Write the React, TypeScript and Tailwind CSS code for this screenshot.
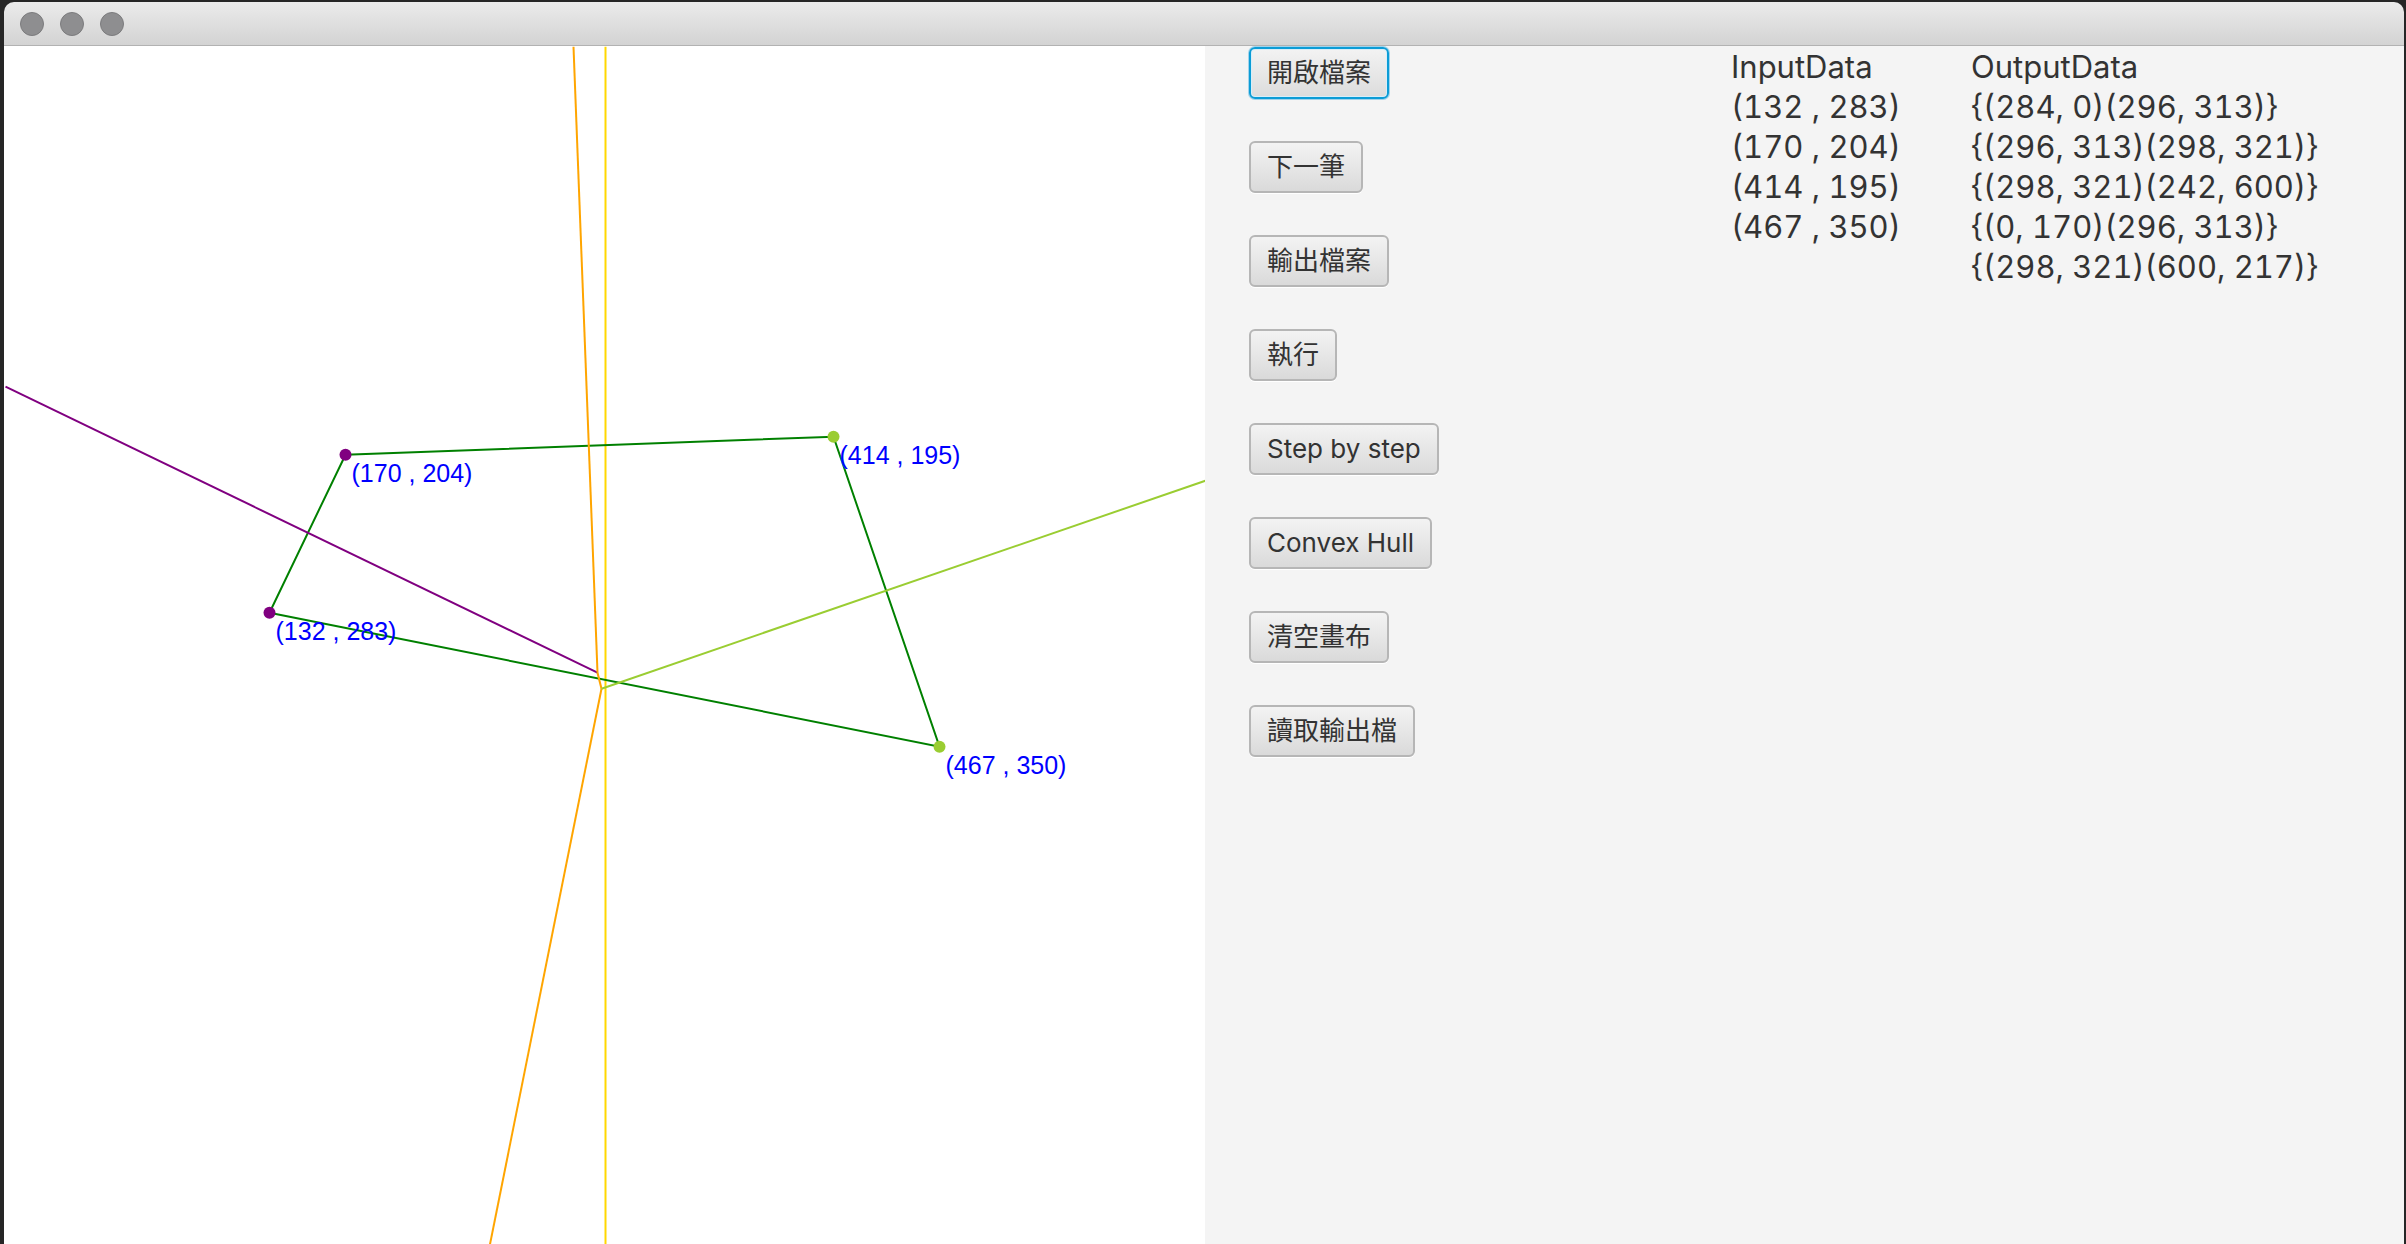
import React from 'react';

// canvas is 600 x 600 logical units, drawn at 2x
const toX = (x: number) => 1.5 + 2 * x;
const toY = (y: number) => 0.7 + 2 * y;

type Pt = [number, number];

const hull: Pt[] = [
  [132, 283],
  [170, 204],
  [414, 195],
  [467, 350],
];

const segments: { from: Pt; to: Pt; color: string }[] = [
  { from: [0, 170], to: [296, 313], color: '#800080' },
  { from: [284, 0], to: [296, 313], color: '#ffa500' },
  { from: [296, 313], to: [298, 321], color: '#ffa500' },
  { from: [298, 321], to: [242, 600], color: '#ffa500' },
  { from: [298, 321], to: [600, 217], color: '#9acd32' },
];

const points: { p: Pt; color: string }[] = [
  { p: [170, 204], color: '#800080' },
  { p: [132, 283], color: '#800080' },
  { p: [414, 195], color: '#9acd32' },
  { p: [467, 350], color: '#9acd32' },
];

const buttons = ['開啟檔案', '下一筆', '輸出檔案', '執行', 'Step by step', 'Convex Hull', '清空畫布', '讀取輸出檔'];

const inputData = ['(132 , 283)', '(170 , 204)', '(414 , 195)', '(467 , 350)'];
const outputData = [
  '{(284, 0)(296, 313)}',
  '{(296, 313)(298, 321)}',
  '{(298, 321)(242, 600)}',
  '{(0, 170)(296, 313)}',
  '{(298, 321)(600, 217)}',
];

const Canvas: React.FC = () => {
  return (
    <div className="w-[1201px] h-full bg-white overflow-hidden">
      <svg width="1201" height="1200" className="block">
        {/* divide line */}
        <line x1={toX(300)} y1={toY(0)} x2={toX(300)} y2={toY(600)} stroke="#ffd700" strokeWidth={2} />

        {/* hull */}
        <polygon
          points={hull.map(([x, y]) => `${toX(x)},${toY(y)}`).join(' ')}
          fill="none"
          stroke="#008000"
          strokeWidth={2}
        />

        {segments.map((s, i) => (
          <line
            key={i}
            x1={toX(s.from[0])}
            y1={toY(s.from[1])}
            x2={toX(s.to[0])}
            y2={toY(s.to[1])}
            stroke={s.color}
            strokeWidth={2}
          />
        ))}

        {points.map(({ p, color }, i) => (
          <g key={i}>
            <circle cx={toX(p[0])} cy={toY(p[1])} r={6} fill={color} />
            <text
              x={toX(p[0]) + 6}
              y={toY(p[1]) + 27}
              fill="#0000ff"
              fontSize={25}
              fontFamily='"Liberation Sans", Arial, sans-serif'
            >
              ({p[0]} , {p[1]})
            </text>
          </g>
        ))}
      </svg>
    </div>
  );
};

const ControlPanel: React.FC = () => {
  return (
    <div className="flex-1 h-full bg-[#f4f4f4] flex text-[#333333] font-['Inter','Noto_Sans_CJK_TC',sans-serif]">
      <div className="w-[526px] pl-[44px] pt-[1px] flex flex-col items-start gap-[42px]">
        {buttons.map((label, index) =>
          index === 0 ? (
            <div
              key={label}
              className="h-[52px] px-[16px] flex items-center rounded-[6px] border-2 border-[#0b9cd6] bg-linear-to-b from-[#f3f3f3] to-[#dcdcdc] shadow-[0_0_0_1px_rgba(60,170,225,0.45),inset_0_0_0_1px_#d7eef9] text-[26px] leading-none whitespace-nowrap"
            >
              {label}
            </div>
          ) : (
            <div
              key={label}
              className="h-[52px] px-[16px] flex items-center rounded-[6px] border-2 border-[#b6b6b6] bg-linear-to-b from-[#f3f3f3] to-[#dadada] shadow-[0_1px_0_#ffffff] text-[26px] leading-none whitespace-nowrap"
            >
              {label}
            </div>
          )
        )}
      </div>

      <div className="w-[240px] pt-[1px] flex flex-col text-[31px] leading-[40px] tabular-nums whitespace-nowrap">
        <div>InputData</div>
        {inputData.map((row) => (
          <div key={row}>{row}</div>
        ))}
      </div>

      <div className="pt-[1px] flex flex-col text-[31px] leading-[40px] tabular-nums whitespace-nowrap">
        <div>OutputData</div>
        {outputData.map((row) => (
          <div key={row}>{row}</div>
        ))}
      </div>
    </div>
  );
};

const App: React.FC = () => {
  return (
    <div className="w-[2406px] h-[1244px] bg-[#262626] pt-[2px] pl-[4px] pr-[2px] overflow-hidden">
      <div className="w-full h-full flex flex-col rounded-t-[10px] overflow-hidden">
        {/* title bar */}
        <div className="h-[44px] shrink-0 flex items-center gap-[16px] pl-[16px] border-b border-[#b2b2b2] bg-linear-to-b from-[#ebebeb] to-[#d3d3d3]">
          <div className="w-[24px] h-[24px] rounded-full bg-[#8e8e90] border border-[#7b7b7d]" />
          <div className="w-[24px] h-[24px] rounded-full bg-[#8e8e90] border border-[#7b7b7d]" />
          <div className="w-[24px] h-[24px] rounded-full bg-[#8e8e90] border border-[#7b7b7d]" />
        </div>

        <div className="flex-1 flex min-h-0">
          <Canvas />
          <ControlPanel />
        </div>
      </div>
    </div>
  );
};

export default App;
